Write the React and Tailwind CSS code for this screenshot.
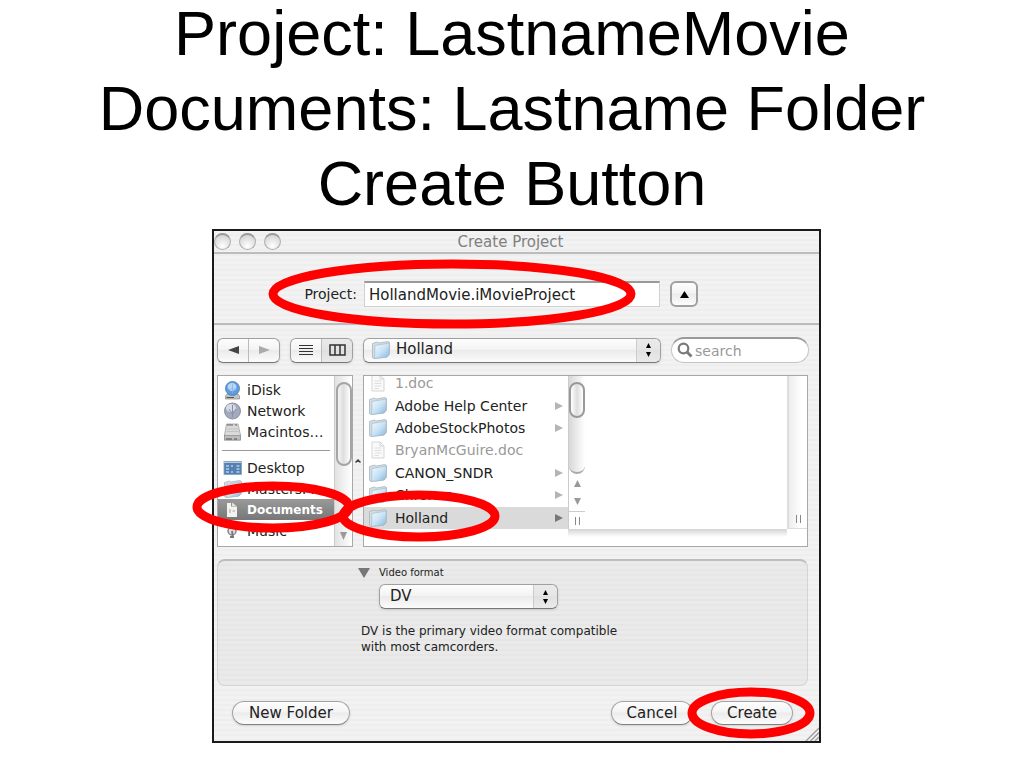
import { useState } from 'react';
import clsx from 'clsx';

const PINSTRIPES = 'bg-[repeating-linear-gradient(180deg,#f2f2f2_0px,#f2f2f2_3px,#eeeeee_3px,#eeeeee_5px)]';
const AQUA = 'bg-[linear-gradient(180deg,#fdfdfd_0%,#f4f4f4_45%,#ebebeb_50%,#fcfcfc_100%)]';

const volumes = [
  { name: 'iDisk', icon: IDiskIcon },
  { name: 'Network', icon: NetworkIcon },
  { name: 'Macintos…', icon: DriveIcon },
];

const places = [
  { name: 'Desktop', icon: DesktopIcon },
  { name: 'MastersF…', icon: FolderIcon },
  { name: 'Documents', icon: DocumentsIcon },
  { name: 'Music', icon: MusicIcon },
];

const files = [
  { name: '1.doc' },
  { name: 'Adobe Help Center', folder: true },
  { name: 'AdobeStockPhotos', folder: true },
  { name: 'BryanMcGuire.doc' },
  { name: 'CANON_SNDR', folder: true },
  { name: 'Chronos', folder: true },
  { name: 'Holland', folder: true },
];

function FolderIcon() {
  return (
    <svg viewBox="0 0 20 20" className="w-5 h-5 shrink-0">
      <defs>
        <linearGradient id="folder-front" x1="0" y1="0" x2="1" y2="1">
          <stop offset="0" stopColor="#f3fafe" />
          <stop offset="0.5" stopColor="#c9e3f5" />
          <stop offset="1" stopColor="#86b4dc" />
        </linearGradient>
      </defs>
      <path d="M1.500 3.500 L6.500 2 L8 3 L17 1.500 L18.500 2.500 V14.500 L16 17 L3 18.500 L1.500 17.500 Z" fill="#d3dde3" stroke="#a3b0b8" strokeWidth="0.7" />
      <path d="M4 5.500 L18.500 3 L17.500 15 L16 17 L3.500 18.500 Z" fill="url(#folder-front)" stroke="#9db6c8" strokeWidth="0.6" />
    </svg>
  );
}

function DocIcon() {
  return (
    <svg viewBox="0 0 20 20" className="w-5 h-5 shrink-0">
      <path d="M4 2 H12 L16 6 V18 H4 Z" fill="#fafafa" stroke="#d5d5d5" />
      <path d="M12 2 V6 H16" fill="none" stroke="#d5d5d5" />
      <path d="M6.500 8 H13.500 M6.500 10.500 H13.500 M6.500 13 H13.500 M6.500 15.500 H11" stroke="#dedede" />
    </svg>
  );
}

function IDiskIcon() {
  return (
    <svg viewBox="0 0 20 20" className="w-5 h-5 shrink-0">
      <path d="M4 14 H15 L16.500 16 V19 H2.500 V16 Z" fill="#c4c4c4" stroke="#8a8a8a" strokeWidth="0.7" />
      <path d="M3.500 17.500 H11" stroke="#555" />
      <circle cx="9.500" cy="8.500" r="7" fill="#5c9ce0" stroke="#4f78a8" strokeWidth="0.8" />
      <ellipse cx="9" cy="7" rx="4.500" ry="4" fill="#cfe6fa" opacity="0.8" />
      <path d="M9.500 4 V13 M5 9 H14" stroke="#86b6e8" strokeWidth="0.8" />
    </svg>
  );
}

function NetworkIcon() {
  return (
    <svg viewBox="0 0 20 20" className="w-5 h-5 shrink-0">
      <circle cx="9.500" cy="10" r="8" fill="#a3aabd" stroke="#7b8294" strokeWidth="0.8" />
      <ellipse cx="8" cy="7" rx="5" ry="4" fill="#e3e7f0" opacity="0.8" />
      <path d="M9.500 4 V16 M6 8 L9.500 13 L13 8" fill="none" stroke="#8790a6" strokeWidth="1" />
    </svg>
  );
}

function DriveIcon() {
  return (
    <svg viewBox="0 0 20 20" className="w-5 h-5 shrink-0">
      <path d="M3.500 2 H15 L17.500 13 V18 H1.500 V13 Z" fill="#dadada" stroke="#a0a0a0" strokeWidth="0.8" />
      <path d="M4 3 H10 M12 3 H14" stroke="#666" strokeWidth="1.200" />
      <path d="M4 7 H15 M3.500 9.500 H15.500" stroke="#c2c2c2" />
      <rect x="1.500" y="13.500" width="16" height="4.500" fill="#bdbdbd" stroke="#939393" strokeWidth="0.8" />
      <path d="M3 17 H9 M11 17 H14" stroke="#555" strokeWidth="1.200" />
    </svg>
  );
}

function DesktopIcon() {
  return (
    <svg viewBox="0 0 20 20" className="w-5 h-5 shrink-0">
      <rect x="1" y="3.500" width="17.500" height="13" fill="#5480b4" stroke="#8ba3be" strokeWidth="0.8" />
      <path d="M1 4.500 H18.500" stroke="#b9cbe0" />
      <path d="M3 8 H6 M3 11 H6 M3 14 H6 M8 8 H10 M8 14 H10 M13.500 8 H16.500 M13.500 11 H16.500 M13.500 14 H16.500" stroke="#b3cdea" strokeWidth="1.500" />
    </svg>
  );
}

function DocumentsIcon() {
  return (
    <svg viewBox="0 0 20 20" className="w-5 h-5 shrink-0">
      <path d="M4 3 H8 V6.500 H14 V17 H4 Z" fill="#f4f4ee" />
      <path d="M9 2.500 L13.500 6 H9 Z" fill="#e3e3dc" />
      <path d="M7 9 V13 M9.500 11 H12" stroke="#a5a59d" />
    </svg>
  );
}

function MusicIcon() {
  return (
    <svg viewBox="0 0 20 20" className="w-5 h-5 shrink-0">
      <circle cx="9" cy="10" r="4" fill="#ddd" stroke="#888" strokeWidth="1.500" />
      <path d="M9 10 L10 17 M7 16 H11" stroke="#777" strokeWidth="1.800" />
    </svg>
  );
}

function SearchIcon() {
  return (
    <svg viewBox="0 0 16 16" className="w-4 h-4">
      <circle cx="6.500" cy="6.500" r="4.800" fill="none" stroke="#7a7a7a" strokeWidth="2.200" />
      <path d="M10 10 L14.500 14.500" stroke="#7a7a7a" strokeWidth="2.800" />
    </svg>
  );
}

function Triangle({ direction = 'up', className }) {
  const points = {
    up: '0,10 5,0 10,10',
    down: '0,0 10,0 5,10',
    left: '10,0 0,5 10,10',
    right: '0,0 10,5 0,10',
  };
  return (
    <svg viewBox="0 0 10 10" preserveAspectRatio="none" className={className}>
      <polygon points={points[direction]} fill="currentColor" />
    </svg>
  );
}

function Popup({ label, value, icon, className }) {
  return (
    <div className={clsx('relative h-[25px]', className)}>
      <select
        aria-label={label}
        className={clsx(
          'w-full h-full appearance-none rounded-md border border-[#a0a0a0] border-b-[#777] shadow-sm text-[15px] text-[#222] outline-none',
          AQUA,
          icon ? 'pl-8' : 'pl-[10px]'
        )}
      >
        <option>{value}</option>
      </select>
      {icon && <span className="absolute left-2 inset-y-0 flex items-center pointer-events-none">{icon}</span>}
      <span className="absolute right-px inset-y-px w-6 flex flex-col items-center justify-center gap-1 rounded-r-md border-l border-[#ccc] bg-[#d8d8d8]/50 text-black pointer-events-none">
        <Triangle className="w-[5px] h-[5px]" />
        <Triangle direction="down" className="w-[5px] h-[5px]" />
      </span>
    </div>
  );
}

function PushButton({ children, className }) {
  return (
    <button
      type="button"
      className={clsx('h-6 rounded-full border border-[#a3a3a3] border-b-[#808080] shadow-sm text-[15px] leading-5 text-[#222]', AQUA, className)}
    >
      {children}
    </button>
  );
}

function Grip() {
  return (
    <span className="flex gap-[3px]">
      <span className="w-px h-2 bg-[#888]" />
      <span className="w-px h-2 bg-[#888]" />
    </span>
  );
}

function Sidebar() {
  const [selected, setSelected] = useState('Documents');

  const renderItem = ({ name, icon: Icon }) => (
    <li key={name}>
      <button
        type="button"
        onClick={() => setSelected(name)}
        className={clsx(
          'w-full h-[21px] pl-[5px] flex items-center gap-1 whitespace-nowrap',
          selected === name && 'bg-[linear-gradient(180deg,#9a9a9a,#777777)] font-bold text-white'
        )}
      >
        <Icon />
        <span className={selected === name ? 'text-xs' : ''}>{name}</span>
      </button>
    </li>
  );

  return (
    <nav className="w-[136px] h-[172px] flex shrink-0 overflow-hidden border border-[#a8a8a8] bg-white">
      <div className="flex-1 pt-[3px]">
        <ul>{volumes.map(renderItem)}</ul>
        <hr className="mt-2 mb-[6px] mx-1 border-t border-[#999]" />
        <ul>{places.map(renderItem)}</ul>
      </div>
      <div className="w-[18px] flex flex-col items-center justify-between border-l border-[#ccc] bg-[linear-gradient(90deg,#e2e2e2,#ffffff)] pt-[6px] pb-[6px]">
        <span className="w-4 h-[84px] rounded-full border-2 border-[#a5a5a5] bg-[linear-gradient(90deg,#f4f4f4,#dedede_45%,#ffffff)]" />
        <Triangle direction="down" className="w-[7px] h-2 text-[#999]" />
      </div>
    </nav>
  );
}

function FileBrowser() {
  const [selected, setSelected] = useState('Holland');

  return (
    <div className="flex-1 h-[172px] overflow-hidden border border-[#a8a8a8] bg-white">
      <div className="flex h-[153px]">
        <ul className="w-[204px] h-[157px] -mt-1 flex flex-col">
          {files.map(({ name, folder }) => (
            <li key={name} className="flex-1">
              <button
                type="button"
                onClick={() => setSelected(name)}
                className={clsx(
                  'w-full h-full pl-1 pr-[5px] flex items-center gap-[7px]',
                  folder ? 'text-[#222]' : 'text-[#999]',
                  selected === name && 'bg-[#dadada]'
                )}
              >
                {folder ? <FolderIcon /> : <DocIcon />}
                <span className="flex-1 text-left leading-[14px]">{name}</span>
                {folder && (
                  <Triangle
                    direction="right"
                    className={clsx('w-2 h-2', selected === name ? 'text-[#777]' : 'text-[#b5b5b5]')}
                  />
                )}
              </button>
            </li>
          ))}
        </ul>
        <div className="w-[17px] flex flex-col items-center border-l border-[#ccc]">
          <div className="w-full h-[98px] pt-[6px] rounded-b-full border-b-2 border-[#aaa] bg-[linear-gradient(90deg,#d8d8d8,#ffffff)]">
            <span className="block w-4 h-9 rounded-full border-2 border-[#999] bg-[linear-gradient(90deg,#ffffff,#dddddd_50%,#ffffff)]" />
          </div>
          <div className="w-full h-[38px] flex flex-col items-center justify-around border-b border-[#ccc] text-[#999]">
            <Triangle className="w-[7px] h-[7px]" />
            <Triangle direction="down" className="w-[7px] h-[7px]" />
          </div>
          <div className="flex-1 flex items-center">
            <Grip />
          </div>
        </div>
        <div className="flex-1" />
        <div className="w-5 pb-[5px] flex items-end justify-center border-l-2 border-b border-[#ddd] bg-[linear-gradient(90deg,#ededed,#ffffff_70%)]">
          <Grip />
        </div>
      </div>
      <div className="h-2 ml-[204px] mr-5 bg-[linear-gradient(180deg,#d4d4d4,#ffffff)]" />
    </div>
  );
}

// red marker rings drawn over the dialog
function Rings() {
  return (
    <svg className="absolute inset-0 w-full h-full overflow-visible pointer-events-none" fill="none" stroke="#ff0000" strokeWidth="9">
      <ellipse cx="238" cy="63" rx="179" ry="30" />
      <ellipse cx="59" cy="276" rx="76" ry="21" />
      <ellipse cx="205" cy="285" rx="76" ry="21" />
      <ellipse cx="537" cy="482" rx="59" ry="21" />
    </svg>
  );
}

function CreateProjectDialog() {
  const [project, setProject] = useState('HollandMovie.iMovieProject');

  return (
    <section className={clsx('relative w-full max-w-[609px] border-2 border-[#1a1a1a] text-sm text-[#222]', PINSTRIPES)}>
      <header className="relative h-[23px] flex items-center justify-center border-b-2 border-[#bcbcbc]">
        <div className="absolute left-0 inset-y-0 flex items-center gap-2">
          {['Close', 'Minimize', 'Zoom'].map((label) => (
            <button
              key={label}
              type="button"
              aria-label={label}
              className="w-[17px] h-[17px] rounded-full border border-[#b0b0b0] border-t-2 border-t-[#999] bg-[radial-gradient(circle_at_50%_80%,#ffffff,#cccccc)]"
            />
          ))}
        </div>
        <h2 className="pr-3 text-[15px] leading-5 text-[#808080]">Create Project</h2>
      </header>

      <div className="h-[71px] pt-[27px] flex border-b-2 border-[#bcbcbc]">
        <label htmlFor="project" className="w-[143px] mr-[7px] text-right leading-[26px]">Project:</label>
        <input
          id="project"
          value={project}
          onChange={(e) => setProject(e.target.value)}
          className="w-[296px] h-[26px] px-1 border border-[#d0d0d0] border-t-2 border-t-[#999] bg-white text-[15px] outline-none"
        />
        <button
          type="button"
          aria-label="Hide browser"
          className={clsx('w-7 h-[26px] ml-[10px] flex items-center justify-center rounded-md border-2 border-[#a0a0a0] text-black', AQUA)}
        >
          <Triangle className="w-[9px] h-[7px]" />
        </button>
      </div>

      <div className="pl-[3px] pr-[10px] pt-3">
        <div className="flex items-center gap-[10px]">
          <div className={clsx('w-[63px] h-[25px] flex rounded-md border border-[#a0a0a0] border-b-[#777] shadow-sm', AQUA)}>
            <button type="button" aria-label="Back" className="flex-1 flex items-center justify-center border-r border-[#bbb] text-[#444]">
              <Triangle direction="left" className="w-[11px] h-2" />
            </button>
            <button type="button" aria-label="Forward" className="flex-1 flex items-center justify-center text-[#aaa]">
              <Triangle direction="right" className="w-[11px] h-2" />
            </button>
          </div>
          <div className={clsx('w-[63px] h-[25px] flex rounded-md border border-[#a0a0a0] border-b-[#777] shadow-sm', AQUA)}>
            <button type="button" aria-label="List view" className="flex-1 flex items-center justify-center border-r border-[#bbb]">
              <svg viewBox="0 0 14 13" className="w-[14px] h-[13px]">
                <path d="M0 1.500 H14 M0 4.500 H14 M0 7.500 H14 M0 10.500 H14" stroke="#333" />
              </svg>
            </button>
            <button type="button" aria-label="Column view" className="flex-1 flex items-center justify-center bg-[#ccc]/40">
              <svg viewBox="0 0 17 12" className="w-[17px] h-3">
                <path d="M1 1 H16 V11 H1 Z M6 1 V11 M11 1 V11" fill="none" stroke="#333" strokeWidth="1.500" />
              </svg>
            </button>
          </div>
          <Popup label="Location" value="Holland" icon={<FolderIcon />} className="flex-1" />
          <div className="relative w-[138px] h-[26px]">
            <input
              type="search"
              aria-label="Search"
              placeholder="search"
              className="w-full h-full pl-[23px] pr-2 rounded-full border border-[#c4c4c4] border-t-2 border-t-[#999] bg-white text-sm outline-none placeholder:text-[#999]"
            />
            <span className="absolute left-[6px] inset-y-0 flex items-center pointer-events-none">
              <SearchIcon />
            </span>
          </div>
        </div>

        <div className="mt-3 mr-px flex">
          <Sidebar />
          <div className="w-[10px] flex items-center justify-center">
            <svg viewBox="0 0 6 4" className="w-[6px] h-1">
              <path d="M0.500 3.500 L3 1 L5.500 3.500" fill="none" stroke="#444" strokeWidth="1.500" />
            </svg>
          </div>
          <FileBrowser />
        </div>

        <div className="h-[127px] mt-3 mr-px pt-1 pl-[143px] rounded-lg border border-[#d4d4d4] border-t-2 border-t-[#bdbdbd] bg-black/3">
          <div className="-ml-[3px] flex items-center gap-[9px] text-[10px] leading-4">
            <Triangle direction="down" className="w-3 h-[10px] text-[#777]" />
            <span>Video format</span>
          </div>
          <Popup label="Video format" value="DV" className="w-[179px] mt-[3px] ml-[18px]" />
          <p className="mt-[14px] text-xs leading-4">
            DV is the primary video format compatible
            <br />
            with most camcorders.
          </p>
        </div>
      </div>

      <footer className="relative pt-[15px] pb-4 pl-[18px] pr-[26px] flex gap-[18px]">
        <PushButton className="w-[118px] mr-auto">New Folder</PushButton>
        <PushButton className="w-[82px]">Cancel</PushButton>
        <PushButton className="w-[82px]">Create</PushButton>
        <svg viewBox="0 0 14 14" className="absolute right-0 bottom-0 w-[14px] h-[14px]">
          <path d="M1 14 L14 1 M5.500 14 L14 5.500 M10 14 L14 10" stroke="#999" strokeWidth="1.300" />
        </svg>
      </footer>

      <Rings />
    </section>
  );
}

export default function App() {
  return (
    <main className="bg-white font-['DejaVu_Sans',sans-serif]">
      <h1 className="-mt-1 pb-2 text-center text-[63px] leading-[75px] text-black font-['Liberation_Sans',Arial,sans-serif]">
        Project: LastnameMovie
        <br />
        Documents: Lastname Folder
        <br />
        Create Button
      </h1>
      <div className="pl-[9px] flex justify-center">
        <CreateProjectDialog />
      </div>
    </main>
  );
}
